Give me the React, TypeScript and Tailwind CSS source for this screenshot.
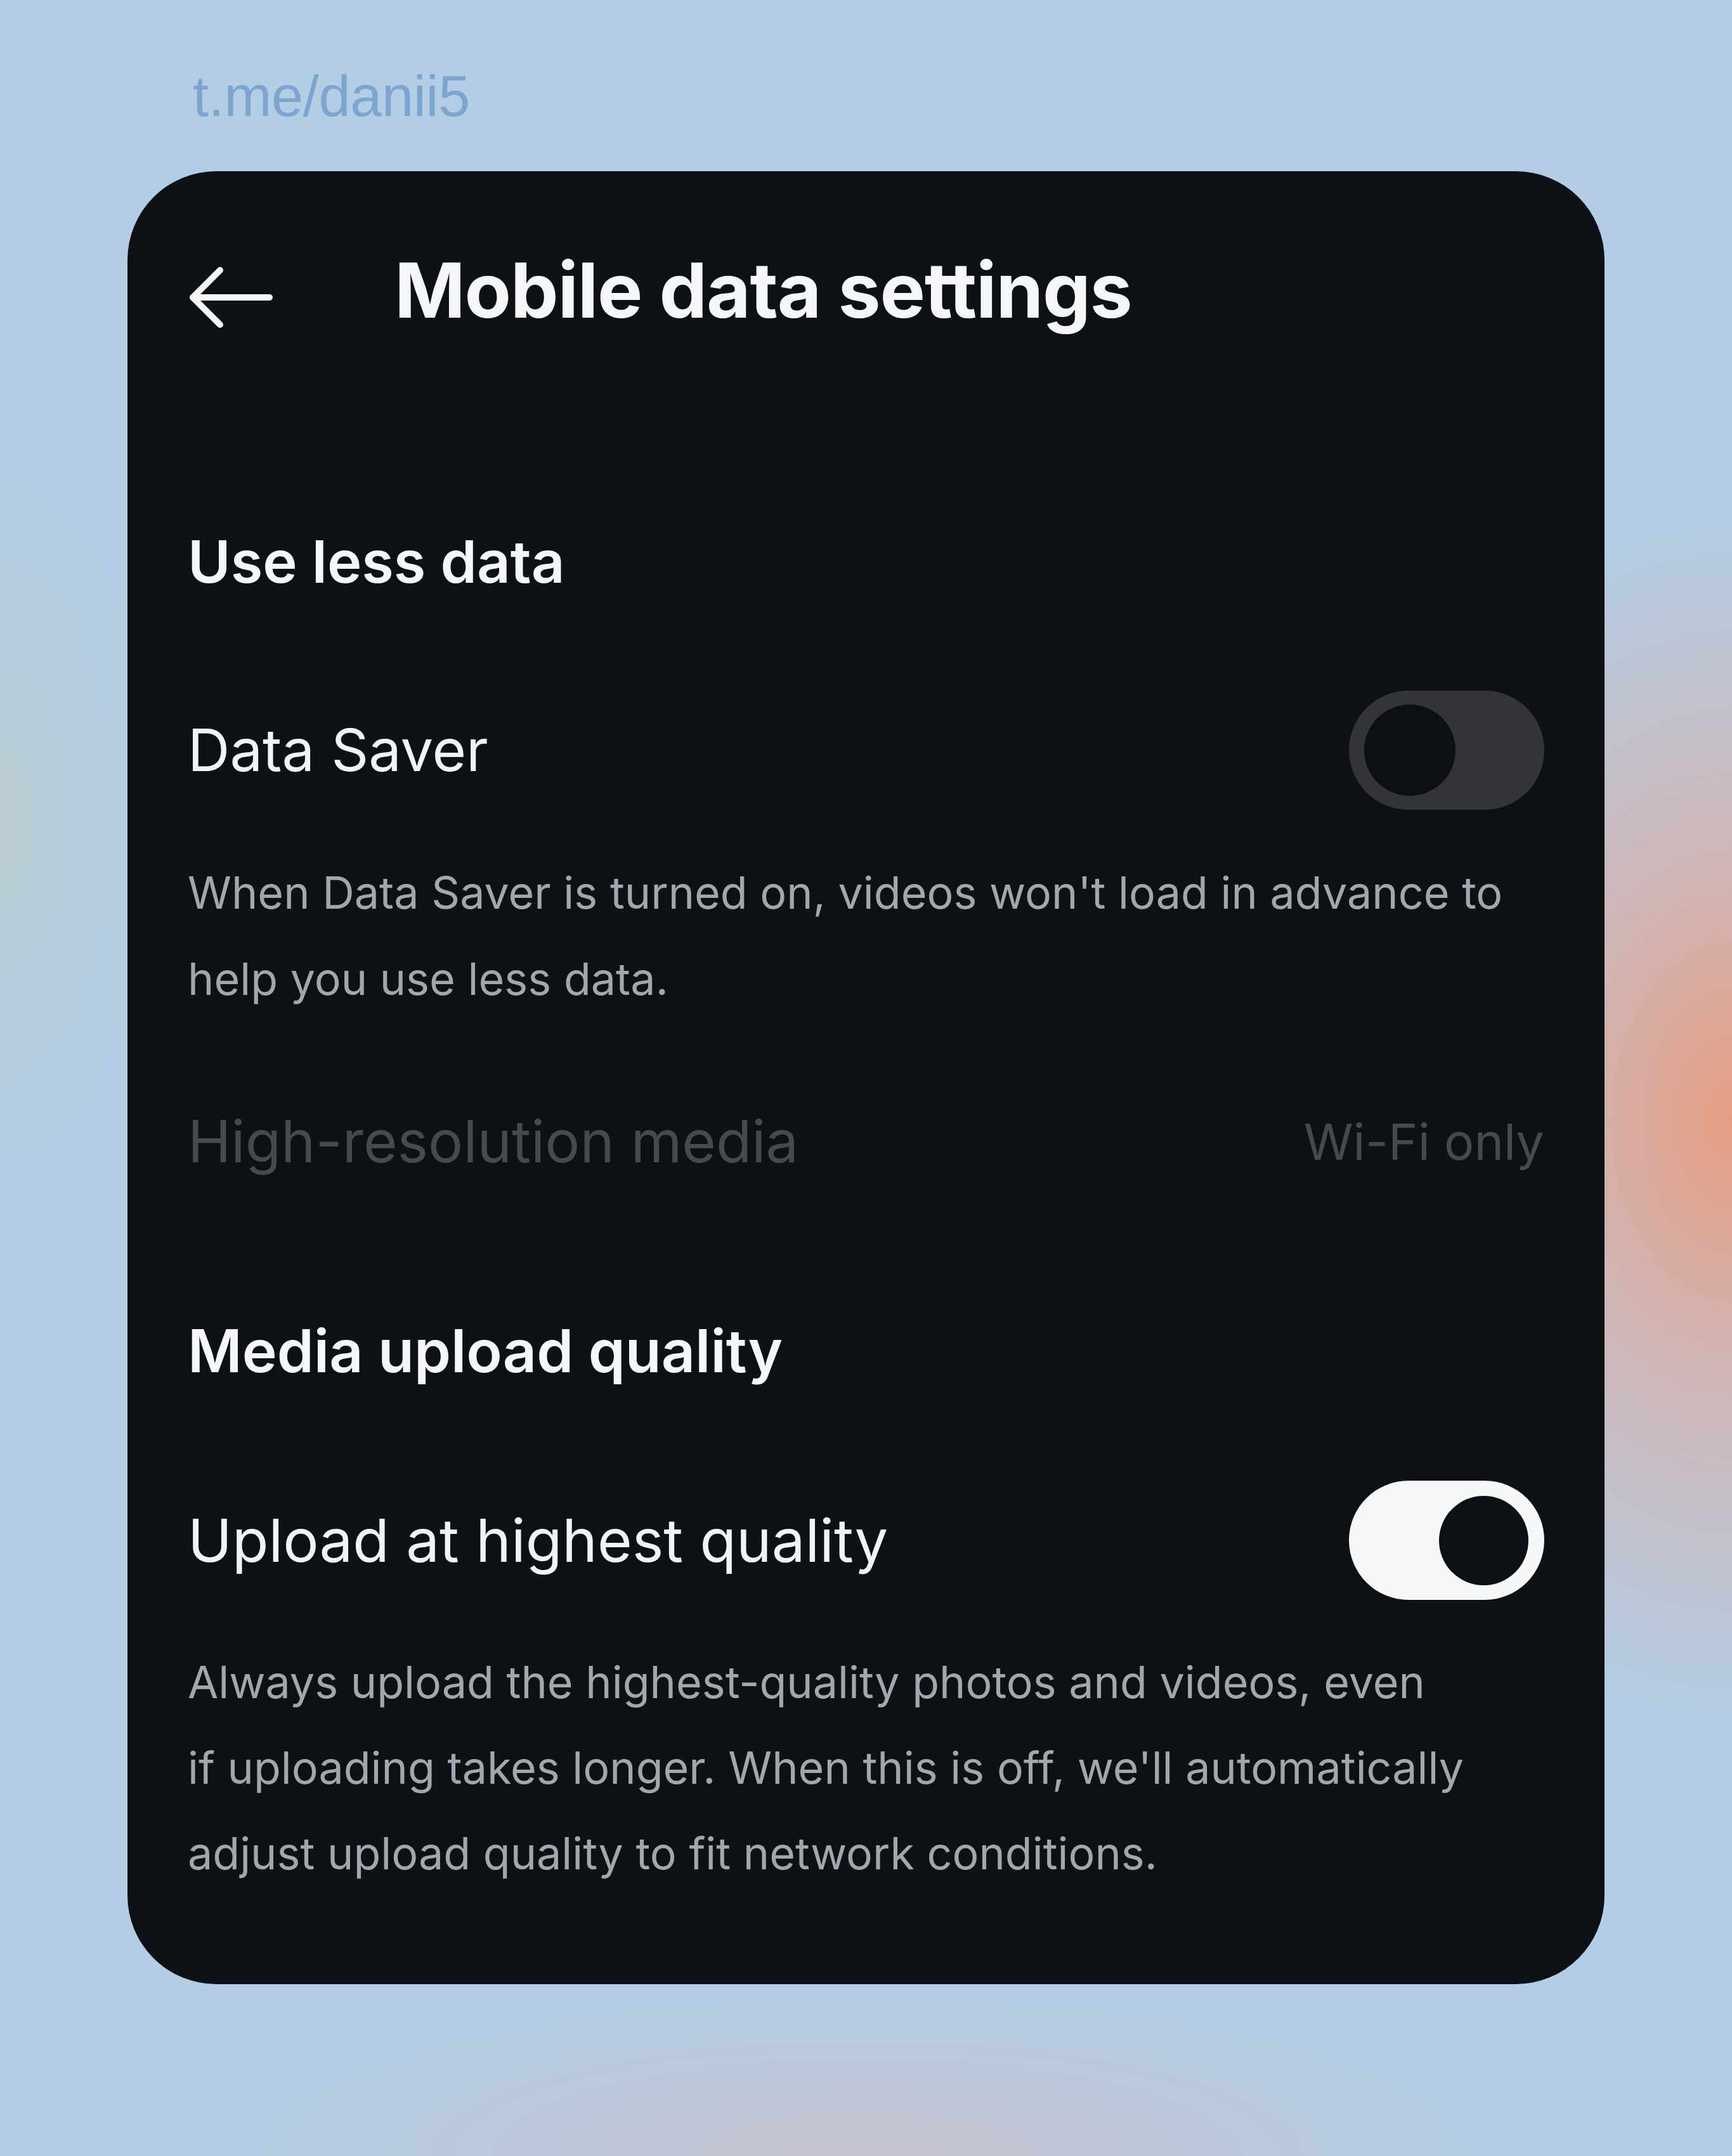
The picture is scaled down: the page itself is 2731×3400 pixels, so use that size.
import React from "react";

const font = { fontFamily: "Inter, 'Noto Sans', sans-serif" } as const;

function Toggle({ on }: { on: boolean }) {
  return on ? (
    <div className="flex h-[188px] w-[308px] shrink-0 items-center justify-end rounded-full bg-[#f6f7f7] pr-[25px]">
      <div className="h-[141px] w-[141px] rounded-full bg-[#0c0f14]" />
    </div>
  ) : (
    <div className="flex h-[188px] w-[308px] shrink-0 items-center justify-start rounded-full bg-[#333438] pl-[24px]">
      <div className="h-[144px] w-[144px] rounded-full bg-[#0c0f14]" />
    </div>
  );
}

export default function App() {
  return (
    <div
      className="relative flex h-[3400px] w-[2731px] flex-col overflow-hidden pl-[201px] pt-[108px]"
      style={{
        backgroundColor: "#b3cde4",
        backgroundImage:
          "radial-gradient(ellipse 640px 950px at 100% 52%, rgba(233,155,125,0.95) 0%, rgba(224,168,155,0.6) 45%, rgba(179,205,228,0) 100%), radial-gradient(ellipse 1000px 260px at 50% 100%, rgba(214,186,190,0.55) 0%, rgba(179,205,228,0) 100%), radial-gradient(ellipse 240px 560px at 0% 38%, rgba(200,204,180,0.35) 0%, rgba(179,205,228,0) 100%)",
      }}
    >
      <div
        className="ml-[103px] h-[89px] text-[90px] leading-[89px] tracking-[-0.3px] text-[#7ea4d0]"
        style={{ fontFamily: "'Liberation Sans', Arial, sans-serif" }}
      >
        t.me/danii5
      </div>

      <div
        className="mt-[73px] flex h-[2859px] w-[2329px] flex-col rounded-[140px] bg-[#0d1015] pl-[95px] pr-[95px] pt-[108px]"
        style={font}
      >
        {/* Header */}
        <div className="flex h-[160px] items-center">
          <svg
            width="132"
            height="96"
            viewBox="0 0 132 96"
            className="ml-[2px] mt-[22px] shrink-0"
            fill="none"
            stroke="#f5f6f7"
            strokeWidth="10"
            strokeLinecap="round"
            strokeLinejoin="round"
          >
            <path d="M6 48 H127" />
            <path d="M49 5 L6 48 L49 91" />
          </svg>
          <div className="ml-[192px] text-[120px] font-bold leading-[160px] tracking-[-1.2px] text-[#f5f6f7]">
            Mobile data settings
          </div>
        </div>

        {/* Use less data */}
        <div className="mt-[288px] text-[92px] font-semibold leading-[120px] text-[#f5f6f7]">
          Use less data
        </div>

        <div className="mt-[143px] flex h-[188px] items-center justify-between">
          <div className="text-[92px] font-normal leading-[120px] text-[#f2f3f5]">Data Saver</div>
          <Toggle on={false} />
        </div>

        <div className="mt-[63px] text-[70px] leading-[136px] text-[#a3a7ad]">
          <div>When Data Saver is turned on, videos won't load in advance to</div>
          <div>help you use less data.</div>
        </div>

        <div className="mt-[128px] flex h-[120px] items-center justify-between">
          <div className="text-[92px] leading-[120px] text-[#46494e]">High-resolution media</div>
          <div className="text-[79px] leading-[120px] text-[#46494e]">Wi-Fi only</div>
        </div>

        {/* Media upload quality */}
        <div className="mt-[210px] text-[93px] font-semibold leading-[120px] text-[#f5f6f7]">
          Media upload quality
        </div>

        <div className="mt-[145px] flex h-[188px] items-center justify-between">
          <div className="text-[94px] font-normal leading-[120px] text-[#f2f3f5]">Upload at highest quality</div>
          <Toggle on={true} />
        </div>

        <div className="mt-[62px] text-[70px] leading-[135px] text-[#a3a7ad]">
          <div>Always upload the highest-quality photos and videos, even</div>
          <div>if uploading takes longer. When this is off, we'll automatically</div>
          <div>adjust upload quality to fit network conditions.</div>
        </div>
      </div>
    </div>
  );
}
